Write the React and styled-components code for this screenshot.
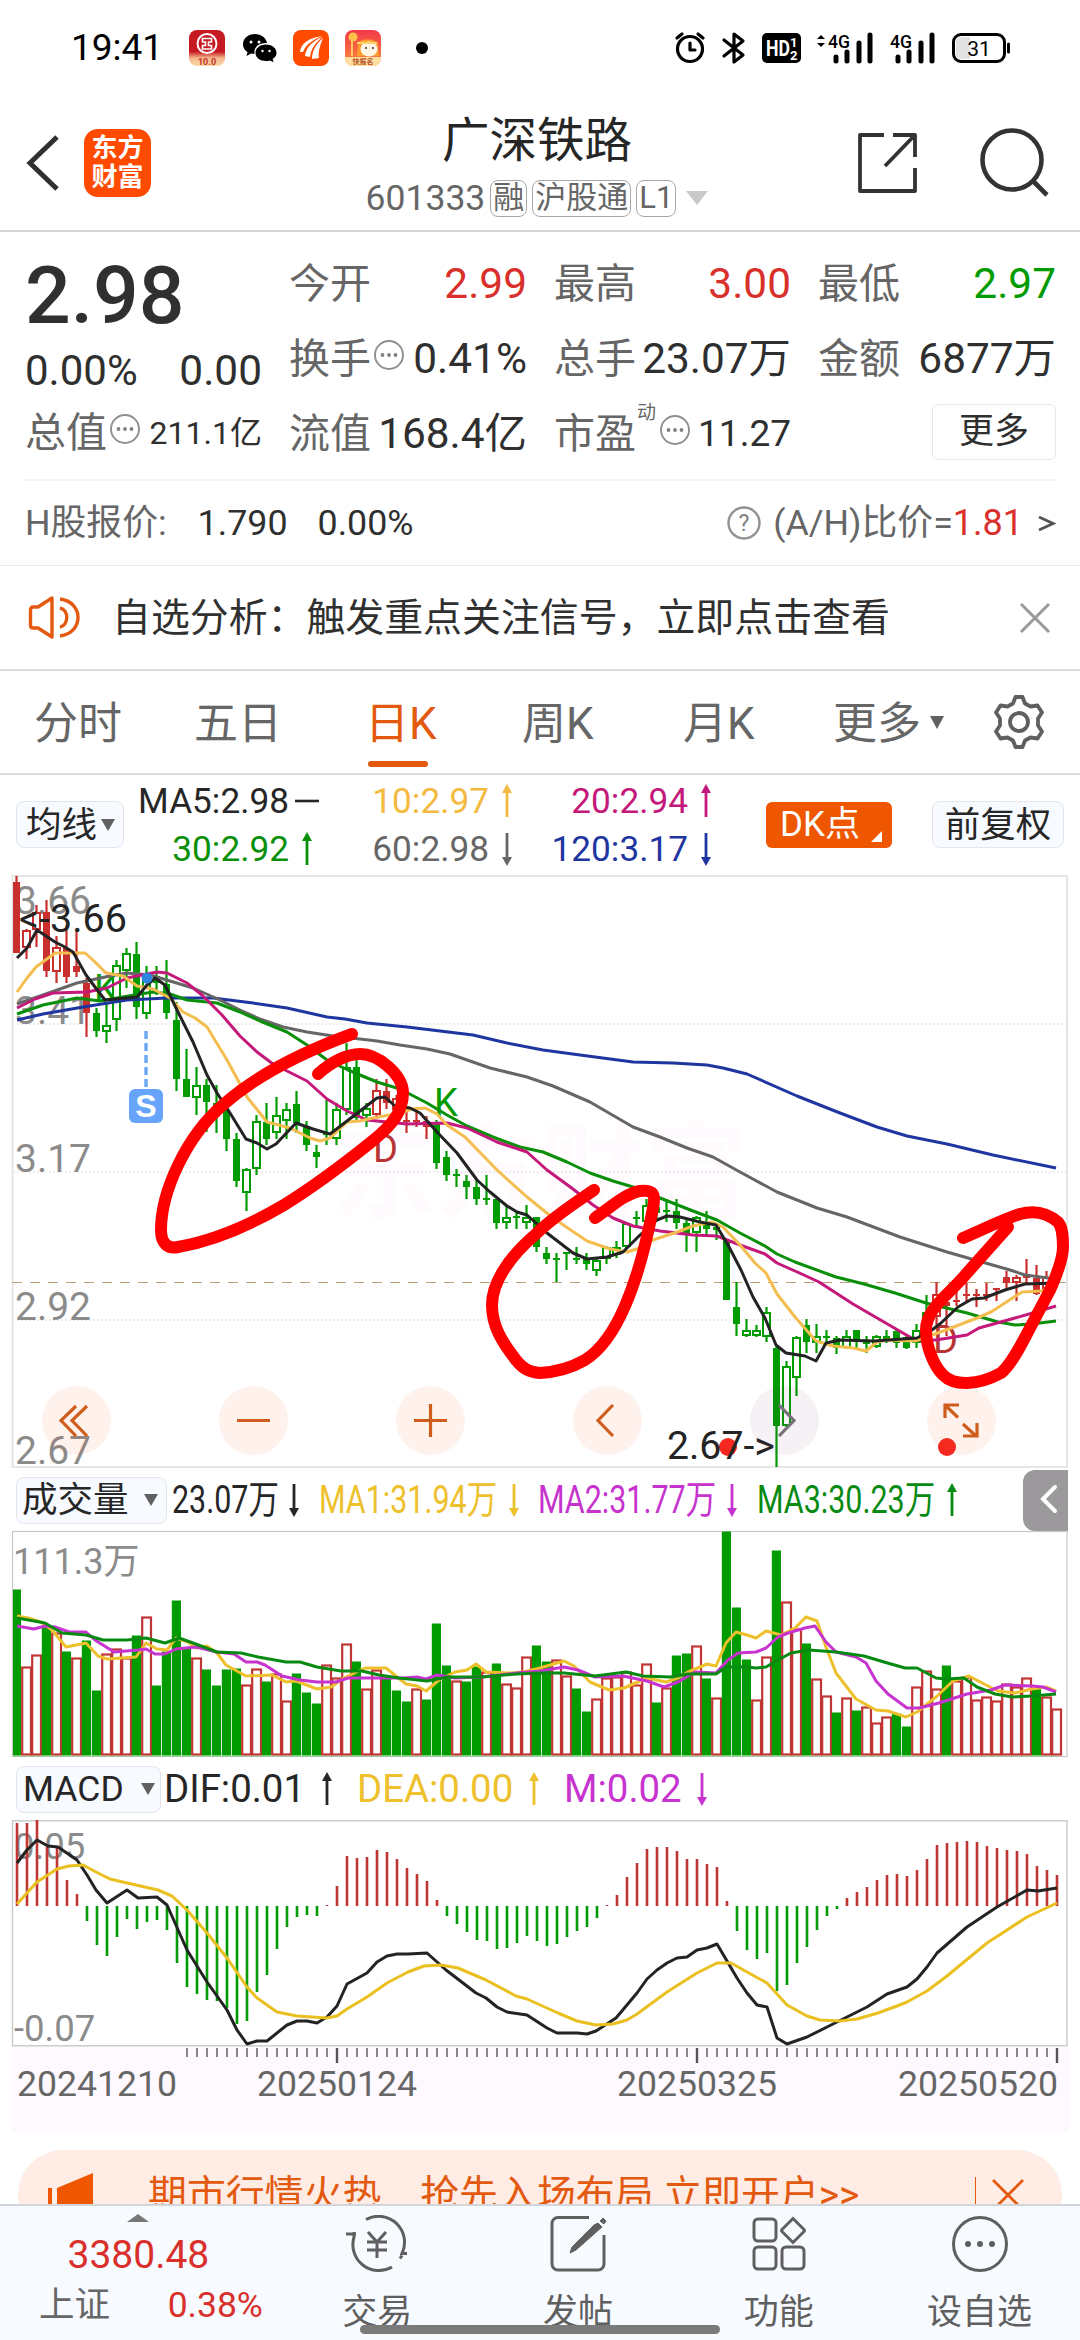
import styled, { createGlobalStyle } from "styled-components";

const GlobalStyle = createGlobalStyle`
  * {
    box-sizing: border-box;
  }

  body {
    margin: 0;
    background: #ffffff;
    font-family: Roboto, "Noto Sans CJK SC", sans-serif;
    color: #2f2f2f;
  }
`;

const RED = "#d9302c";
const UP = "#c03634";
const GREEN = "#009b00";
const ORANGE = "#e3590f";
const GRAY = "#666666";

const Container = styled.div`
  width: 1080px;
  height: 2340px;
  display: flex;
  flex-direction: column;
  overflow: hidden;
  white-space: nowrap;
`;

const Main = styled.main`
  height: 2204px;
  flex: none;
  overflow: hidden;
`;

const StatusBar = styled.div`
  height: 95px;
  padding: 0 68px 0 71px;
  display: flex;
  justify-content: space-between;
  align-items: center;
`;

const StatusGroup = styled.div`
  display: flex;
  align-items: center;
`;

const Clock = styled.span`
  font-size: 37px;
  line-height: 40px;
  width: 118px;
  color: #000000;
`;

const Header = styled.header`
  height: 137px;
  border-bottom: 2px solid #d6d6d8;
  display: grid;
  grid-template-columns: 1fr auto 1fr;
  padding: 0 31px 0 25px;
`;

const HeaderSide = styled.div`
  display: flex;
  align-items: center;
  height: 136px;
  justify-content: ${(props) => (props.$end ? "flex-end" : "flex-start")};
  gap: ${(props) => props.$gap}px;
`;

const Logo = styled.div`
  width: 67px;
  height: 68px;
  border-radius: 14px;
  background: #ff4a00;
  color: #ffffff;
  font-size: 26px;
  line-height: 29px;
  font-weight: 700;
  text-align: center;
  padding-top: 5px;
`;

const TitleBlock = styled.div`
  display: flex;
  flex-direction: column;
  align-items: center;
  padding-top: 17px;
`;

const Title = styled.h1`
  margin: 0;
  font-size: 47.5px;
  font-weight: 400;
  line-height: 58px;
  color: #262626;
`;

const CodeRow = styled.div`
  display: flex;
  align-items: center;
  margin-top: 9px;
  gap: 5px;
  font-size: 35.5px;
  line-height: 38px;
  color: ${GRAY};
`;

const Tag = styled.span`
  height: 37px;
  border: 1.5px solid #a8a8a8;
  border-radius: 8px;
  padding: 0 2px;
  font-size: 31px;
  line-height: 33px;
`;

const Caret = styled.span`
  width: 0;
  height: 0;
  border-left: ${(props) => props.$w / 2}px solid transparent;
  border-right: ${(props) => props.$w / 2}px solid transparent;
  border-top: ${(props) => props.$h}px solid ${(props) => props.$color || "#606060"};
  margin-left: ${(props) => props.$ml || 0}px;
`;

const Quote = styled.section`
  height: 249px;
  margin: 0 24px 0 25px;
  border-bottom: 2px solid #f4f4f4;
  display: flex;
  gap: 27px;
`;

const QuoteLeft = styled.div`
  width: 237px;
  padding-top: 20px;
`;

const Price = styled.div`
  font-size: 80.5px;
  font-weight: 500;
  line-height: 88px;
  color: #303030;
`;

const Metric = styled.div`
  display: flex;
  align-items: center;
  height: ${(props) => props.$h || 75}px;
  font-size: 42px;
  line-height: 50px;
`;

const Label = styled.span`
  font-size: 41px;
  color: ${GRAY};
`;

const Sup = styled.span`
  font-size: 19px;
  line-height: 20px;
  align-self: flex-start;
  margin: 7px 1px 0;
  color: ${GRAY};
`;

const Value = styled.span`
  margin-left: auto;
  font-size: ${(props) => props.$size || 42.4}px;
  color: ${(props) => props.$color || "#2f2f2f"};
`;

const QuoteGrid = styled.div`
  display: grid;
  grid-template-columns: 238px 237px 238px;
  grid-auto-rows: 75px;
  column-gap: 27px;
  padding-top: 14px;
`;

const MoreButton = styled.button`
  margin: 8px 0 0 auto;
  width: 124px;
  height: 56px;
  border: 1.5px solid #e8e6e8;
  border-radius: 6px;
  background: #ffffff;
  font: 35px/48px Roboto, "Noto Sans CJK SC", sans-serif;
  color: #2f2f2f;
  padding: 0;
`;

const HShare = styled.section`
  height: 85px;
  padding: 0 24px 0 25px;
  border-bottom: 1.5px solid #ebebeb;
  display: flex;
  align-items: center;
  font-size: 35.8px;
  line-height: 40px;
  color: ${GRAY};
`;

const Dark = styled.span`
  color: #2f2f2f;
  margin-left: ${(props) => props.$ml}px;
`;

const Ratio = styled.div`
  margin-left: auto;
  display: flex;
  align-items: center;
`;

const Notice = styled.section`
  height: 105px;
  border-bottom: 2px solid #dcdcdc;
  padding: 0 29px 0 28px;
  display: flex;
  align-items: center;
  font-size: 38.9px;
  line-height: 44px;
  color: #303030;
`;

const NoticeText = styled.span`
  margin-left: 30px;
  margin-right: auto;
`;

const Tabs = styled.nav`
  height: 104px;
  border-bottom: 2px solid #dcdcdc;
  padding: 0 28px 0 34px;
  display: flex;
  align-items: center;
  font-size: 44px;
  line-height: 50px;
  color: ${GRAY};

  svg {
    flex: none;
  }
`;

const Tab = styled.a`
  width: ${(props) => props.$w}px;
  height: 102px;
  padding-top: 28px;
  display: flex;
  flex-direction: column;
  color: ${(props) => (props.$active ? ORANGE : GRAY)};

  &::after {
    content: "";
    width: 60px;
    height: 6px;
    border-radius: 3px;
    margin: 12px 0 0 3px;
    background: ${(props) => (props.$active ? ORANGE : "transparent")};
  }
`;

const Legend = styled.section`
  height: 95px;
  display: flex;
  align-items: center;
  padding: 4px 16px 0;
`;

const Pill = styled.button`
  width: ${(props) => props.$w}px;
  height: 47px;
  flex: none;
  border: 1.5px solid #e4e4ee;
  border-radius: 8px;
  background: #f7faff;
  display: flex;
  align-items: center;
  justify-content: ${(props) => (props.$center ? "center" : "flex-start")};
  padding: 0 0 0 ${(props) => (props.$center ? 0 : props.$pad)}px;
  font: 35.5px/44px Roboto, "Noto Sans CJK SC", sans-serif;
  color: #262626;
`;

const AverageGrid = styled.div`
  display: grid;
  grid-template-columns: 195px 200px 199px;
  grid-auto-rows: 48px;
  width: 642px;
`;

const Average = styled.div`
  display: flex;
  align-items: center;
  justify-content: flex-end;
  gap: 6px;
  font-size: 35.2px;
  line-height: 40px;
  color: ${(props) => props.$color};
`;

const DKButton = styled.button`
  width: 126px;
  height: 46px;
  border: 0;
  border-radius: 6px;
  background: #ef5600;
  color: #ffffff;
  display: flex;
  align-items: center;
  padding: 0 0 0 14px;
  margin-right: 40px;
  font: 35px/44px Roboto, "Noto Sans CJK SC", sans-serif;
`;

const Corner = styled.span`
  align-self: flex-end;
  margin: 0 0 6px 11px;
  border-left: 11px solid transparent;
  border-bottom: 11px solid #ffffff;
`;

const ChartArea = styled.div`
  position: relative;
  height: ${(props) => props.$h}px;

  svg {
    display: block;
  }
`;

const Controls = styled.div`
  position: absolute;
  left: 42px;
  right: 84px;
  top: 516px;
  display: flex;
  justify-content: space-between;
`;

const RoundButton = styled.button`
  width: 69px;
  height: 69px;
  border: 0;
  border-radius: 50%;
  padding: 0;
  background: ${(props) => (props.$muted ? "rgba(110, 60, 120, 0.07)" : "rgba(255, 90, 20, 0.08)")};
`;

const IndicatorRow = styled.div`
  height: ${(props) => props.$h}px;
  padding-left: 16px;
  display: flex;
  align-items: center;
  font-size: 38.4px;
  line-height: 46px;
`;

const Stat = styled.span`
  width: ${(props) => props.$w}px;
  margin-left: ${(props) => props.$ml}px;
  margin-right: ${(props) => props.$mr || 12}px;
  color: ${(props) => props.$color};
`;

const Narrow = styled.span`
  display: inline-block;
  transform: scaleX(0.793);
  transform-origin: left center;
`;

const ArrowSlot = styled.span`
  width: 12px;
  height: 34px;
  color: ${(props) => props.$color};
`;

const Collapse = styled.button`
  width: 45px;
  height: 61px;
  border: 0;
  padding: 0 0 0 2px;
  margin-left: auto;
  margin-right: 12px;
  border-radius: 12px 0 0 12px;
  background: #9b999c;
`;

const Axis = styled.div`
  margin: 0 11px 0 12px;
  height: 85px;
  background: #fdf9fe;
`;

const Banner = styled.div`
  height: 90px;
  margin: 18px 18px 0;
  border-radius: 45px;
  background: #ffece4;
  color: ${ORANGE};
  display: flex;
  align-items: center;
  padding: 0 38px 0 30px;
  font-size: 38.9px;
  line-height: 44px;
`;

const BannerText = styled.span`
  margin-left: 54px;
  margin-right: auto;
  white-space: pre;
`;

const Divider = styled.span`
  width: 1.5px;
  height: 36px;
  background: ${ORANGE};
  margin-right: 16px;
`;

const BottomBar = styled.footer`
  height: 136px;
  flex: none;
  position: relative;
  border-top: 2px solid #d3d5dc;
  background: #f7faff;
  display: flex;
`;

const IndexCard = styled.div`
  width: 277px;
  padding-top: 8px;
  display: flex;
  flex-direction: column;
  align-items: center;
  color: ${RED};
`;

const IndexValue = styled.div`
  font-size: 39px;
  line-height: 44px;
  margin-top: 11px;
`;

const IndexRow = styled.div`
  width: 224px;
  display: flex;
  justify-content: space-between;
  margin-top: 8px;
  margin-left: 25px;
  font-size: 35.5px;
  line-height: 40px;
`;

const Name = styled.span`
  color: ${GRAY};
`;

const NavItem = styled.a`
  width: 201px;
  padding-top: 9px;
  display: flex;
  flex-direction: column;
  align-items: center;
  gap: 20px;
  font-size: 35px;
  line-height: 40px;
  color: #5f5f5f;
`;

const HomeIndicator = styled.div`
  position: absolute;
  left: 360px;
  bottom: 6px;
  width: 360px;
  height: 9px;
  border-radius: 5px;
  background: #7a7a7a;
`;

/* [high, body top, body bottom, low, kind]; upper case is a solid body */
const candles = [
  [6, 12, 83, 83, "R"], [59, 60, 78, 89, "r"], [35, 42, 60, 77, "r"], [30, 42, 101, 107, "R"], [66, 77, 102, 113, "r"],
  [55, 78, 107, 113, "R"], [60, 96, 102, 107, "R"], [108, 113, 143, 167, "R"], [138, 143, 161, 167, "G"], [132, 155, 162, 173, "g"],
  [90, 95, 150, 161, "g"], [78, 83, 101, 118, "g"], [72, 84, 137, 149, "G"], [96, 104, 144, 149, "g"], [96, 106, 113, 125, "G"],
  [90, 114, 143, 149, "G"], [132, 150, 209, 221, "G"], [179, 209, 227, 227, "G"], [197, 215, 228, 245, "g"], [209, 215, 232, 262, "G"],
  [215, 233, 245, 263, "G"], [235, 240, 269, 281, "G"], [263, 269, 311, 317, "G"], [298, 299, 323, 341, "g"], [245, 251, 299, 305, "g"],
  [233, 252, 269, 275, "G"], [227, 245, 263, 269, "g"], [233, 239, 251, 269, "g"], [221, 234, 253, 263, "G"], [251, 256, 275, 281, "G"],
  [275, 282, 287, 298, "G"], [230, 263, 265, 275, "G"], [233, 239, 269, 275, "g"], [173, 197, 240, 245, "g"], [183, 197, 248, 250, "G"],
  [233, 238, 246, 257, "g"], [209, 220, 245, 249, "r"], [209, 221, 233, 239, "R"], [225, 228, 240, 243, "r"], [240, 250, 252, 263, "R"],
  [240, 250, 252, 257, "R"], [246, 251, 257, 269, "R"], [250, 252, 293, 299, "G"], [281, 287, 305, 311, "G"], [299, 304, 306, 317, "G"],
  [305, 311, 317, 329, "G"], [310, 317, 329, 335, "G"], [305, 328, 330, 335, "G"], [329, 329, 353, 359, "G"], [335, 347, 353, 359, "g"],
  [341, 346, 348, 359, "G"], [335, 347, 353, 359, "g"], [347, 347, 377, 382, "G"], [377, 383, 389, 394, "G"], [383, 388, 390, 412, "G"],
  [382, 382, 384, 400, "G"], [377, 388, 390, 394, "G"], [383, 389, 394, 400, "G"], [389, 390, 401, 406, "g"], [376, 377, 389, 394, "g"],
  [371, 377, 385, 388, "g"], [352, 353, 377, 378, "g"], [341, 347, 349, 357, "G"], [329, 335, 352, 355, "g"], [330, 337, 343, 350, "G"],
  [329, 340, 342, 352, "G"], [329, 341, 353, 359, "G"], [350, 353, 364, 382, "G"], [346, 347, 363, 382, "g"], [341, 353, 359, 365, "G"],
  [353, 357, 360, 370, "G"], [370, 370, 430, 430, "G"], [412, 437, 454, 466, "G"], [449, 460, 466, 467, "g"], [455, 460, 466, 467, "g"],
  [437, 442, 467, 472, "g"], [475, 478, 556, 597, "G"], [491, 496, 556, 557, "g"], [466, 467, 508, 526, "g"], [449, 455, 472, 483, "G"],
  [454, 466, 473, 483, "g"], [460, 466, 468, 473, "G"], [466, 468, 478, 484, "G"], [460, 466, 478, 479, "g"], [460, 460, 472, 479, "G"],
  [466, 472, 474, 483, "G"], [465, 466, 477, 478, "g"], [460, 466, 469, 473, "G"], [460, 461, 473, 478, "G"], [466, 467, 478, 479, "G"],
  [454, 460, 473, 478, "g"], [425, 442, 460, 465, "g"], [412, 424, 447, 455, "r"], [430, 432, 436, 466, "R"], [419, 430, 432, 436, "R"],
  [413, 424, 426, 431, "R"], [419, 424, 426, 437, "R"], [413, 424, 426, 431, "R"], [418, 418, 420, 431, "R"], [401, 407, 413, 419, "R"],
  [405, 407, 413, 431, "r"], [389, 406, 408, 413, "R"], [395, 408, 424, 425, "R"], [401, 407, 419, 421, "r"], [405, 407, 413, 418, "R"],
];

const priceLines = [
  {
    color: "#1f35a0",
    points: "17,150 43,144 83,137 127,130 167,128 213,128 253,133 287,138 327,147 345,149 367,153 407,157 440,161 473,165 507,173 543,180 580,185 633,192 673,193 707,195 723,198 747,204 797,226 840,243 877,257 907,266 947,274 993,285 1056,298",
  },
  {
    color: "#666666",
    points: "17,134 43,125 77,113 110,106 127,103 150,105 170,111 193,118 220,130 240,140 260,149 283,157 307,162 333,166 360,169 377,171 400,175 427,179 450,184 490,198 527,207 553,216 590,232 633,257 660,267 687,278 713,287 740,302 777,322 817,338 847,347 900,367 947,382 1010,400 1025,405 1056,409",
  },
  {
    color: "#098f09",
    points: "17,144 43,135 77,128 100,131 117,128 140,124 153,122 170,124 187,130 217,133 240,142 260,151 287,162 307,175 327,190 348,200 360,205 377,212 400,219 427,233 447,245 467,256 493,267 520,277 543,282 567,292 590,303 613,311 633,317 660,328 693,341 717,350 740,363 765,376 777,384 795,392 836,407 864,414 895,423 926,433 967,443 998,452 1015,455 1032,454 1056,451",
  },
  {
    color: "#c4187a",
    points: "17,138 35,129 53,123 87,122 107,118 127,108 157,102 167,103 187,113 202,125 222,145 240,166 257,182 273,194 307,211 327,229 347,241 367,250 407,254 447,253 467,258 497,272 527,282 547,300 573,319 593,335 613,348 633,356 660,361 693,365 717,366 740,375 765,384 777,393 795,401 819,412 853,434 884,452 915,470 936,470 967,465 979,458 1008,450 1036,442 1056,436",
  },
  {
    color: "#f4bd4f",
    points: "17,122 27,108 36,97 55,83 85,83 95,92 106,103 123,106 137,116 153,119 170,128 183,142 195,148 207,157 227,190 247,227 267,252 290,258 310,268 320,271 330,268 347,252 360,251 373,248 400,243 412,239 425,238 437,244 447,255 465,267 497,300 527,327 553,348 587,371 610,379 627,382 640,378 653,370 677,362 693,356 712,352 723,357 740,375 755,393 766,403 777,424 795,447 816,471 833,476 853,478 866,481 877,472 888,470 915,471 946,460 977,448 991,442 1022,422 1041,421 1056,417",
  },
  {
    color: "#232323",
    points: "17,88 27,78 37,60 55,72 63,76 73,82 86,105 95,117 105,130 137,127 147,115 155,108 165,115 177,140 193,172 207,205 217,223 230,243 246,269 257,273 267,279 276,274 296,253 313,259 330,264 347,251 360,241 377,228 385,227 395,236 410,238 420,243 437,262 457,283 477,310 490,322 507,336 517,342 527,345 547,363 573,383 587,389 607,387 623,382 640,365 657,350 667,346 680,347 700,352 716,355 728,375 741,400 753,427 765,448 776,475 786,483 805,486 816,491 826,473 840,470 874,471 917,468 932,460 941,453 958,437 972,429 984,428 1005,420 1025,414 1056,413",
  },
];

const volumes = [
  166, 89, 101, 128, 123, 104, 98, 115, 65, 102, 107, 98, 120, 139, 70, 104, 155, 108, 98, 86, 70, 86, 87, 71, 87,
  74, 82, 55, 82, 63, 52, 91, 78, 112, 94, 67, 86, 79, 65, 54, 67, 56, 132, 90, 75, 74, 89, 84, 92, 72,
  68, 99, 110, 94, 96, 80, 67, 44, 57, 78, 79, 84, 71, 92, 53, 68, 100, 102, 110, 77, 58, 224, 148, 96, 56,
  99, 205, 154, 127, 112, 77, 60, 43, 58, 45, 49, 33, 39, 42, 29, 69, 85, 67, 90, 75, 79, 56, 59, 55, 72,
  69, 78, 67, 59, 47,
];

const risingVolumes = [
  1, 2, 4, 6, 9, 10, 11, 13, 18, 23, 24, 26, 27, 31, 32, 33, 35, 36, 40, 44, 47, 49, 50, 51, 54, 55, 58, 59, 60, 61, 62,
  63, 65, 68, 70, 74, 75, 77, 78, 80, 81, 83, 85, 86, 87, 90, 91, 92, 94, 95, 96, 97, 98, 99, 100, 101, 103, 104,
];

const volumeLines = [
  {
    color: "#edc02c",
    points: "17,86 28,88 41,92 52,100 66,117 86,113 98,126 107,129 136,127 146,113 157,119 167,120 176,108 188,112 196,118 207,116 217,123 226,135 246,146 272,145 286,152 296,151 317,159 331,157 344,148 365,138 386,138 406,154 417,156 426,161 439,150 455,142 467,140 476,134 486,142 510,143 523,142 540,138 564,131 574,136 590,152 609,160 624,158 647,148 666,152 678,148 688,142 707,134 716,136 726,113 736,102 747,105 756,108 766,101 781,105 795,98 806,87 817,91 826,117 836,143 856,169 876,180 888,181 906,187 917,182 936,167 953,151 969,146 986,155 998,161 1015,163 1032,159 1046,157 1056,161",
  },
  {
    color: "#c733cf",
    points: "17,96 34,99 45,96 55,97 69,102 86,102 95,110 114,122 138,120 146,119 155,124 165,124 176,119 196,117 217,122 234,124 246,132 257,132 265,135 282,146 300,150 317,152 336,152 348,148 372,148 403,148 417,147 426,149 437,145 455,148 482,147 517,143 540,141 564,137 578,140 595,147 623,146 647,151 664,157 678,152 695,142 716,143 728,130 738,123 756,122 766,118 778,107 788,103 805,98 815,96 826,112 836,122 856,127 866,133 876,151 888,164 907,178 919,178 939,173 967,164 991,160 1005,155 1032,156 1043,157 1056,162",
  },
  {
    color: "#078a12",
    points: "17,88 34,91 45,93 62,103 86,105 103,110 127,110 146,108 165,113 179,108 193,113 217,122 241,123 258,127 286,132 300,132 317,137 341,141 362,141 379,145 399,148 427,151 448,147 482,147 517,144 540,143 564,143 595,146 626,142 643,146 671,147 688,144 716,144 726,137 747,137 756,138 766,137 778,130 791,123 809,120 836,122 864,126 884,132 905,138 917,138 936,148 946,149 964,148 977,157 995,164 1012,167 1032,166 1056,164",
  },
];

const histogram = [
  83, 83, 86, 59, 60, 26, 12, -15, -39, -50, -31, -13, -23, -16, -14, -24, -57, -81, -88, -94, -95, -102, -118, -115, -86,
  -69, -43, -21, -11, -9, -10, 1, 20, 50, 48, 49, 56, 54, 47, 38, 32, 25, 6, -10, -18, -26, -34, -35, -43, -42,
  -37, -30, -35, -40, -38, -31, -25, -21, -12, 1, 11, 29, 43, 57, 59, 59, 55, 47, 47, 42, 39, 5, -25, -44, -53,
  -47, -85, -79, -57, -41, -24, -10, -3, 8, 14, 19, 26, 31, 32, 30, 36, 47, 61, 63, 64, 65, 64, 60, 58, 56,
  55, 52, 40, 36, 31,
];

const macdLines = [
  {
    color: "#232323",
    points: "17,43 27,30 37,20 48,26 58,27 77,40 87,55 96,70 107,83 127,70 138,78 157,77 167,85 187,130 207,162 227,190 237,210 247,224 257,221 267,221 277,213 287,205 297,201 307,201 317,203 327,197 337,186 347,164 367,153 377,142 387,136 397,134 408,134 427,133 446,150 476,173 486,178 497,187 507,192 527,195 547,208 557,213 577,213 587,214 596,211 616,198 637,173 647,159 657,150 667,143 677,138 687,137 697,130 707,128 717,124 737,158 747,173 757,185 767,187 777,218 787,224 807,217 827,207 847,197 867,187 887,174 907,167 917,159 927,147 937,133 967,107 997,87 1027,70 1038,71 1057,68",
  },
  {
    color: "#eabf20",
    points: "17,84 37,62 57,49 69,46 83,45 96,52 110,59 127,63 158,70 172,76 187,90 207,113 227,138 247,167 257,178 277,192 297,196 327,198 337,196 347,189 367,177 387,163 408,152 424,146 441,145 458,148 486,160 516,176 527,179 558,193 577,201 596,205 613,204 627,200 637,194 667,172 697,153 717,143 731,143 747,152 767,163 787,185 807,196 820,200 840,201 857,199 878,193 897,186 907,182 927,171 947,156 987,123 1027,97 1057,83",
  },
];

const barX = (i) => 17 + i * 10;

const Lines = ({ lines }) => (
  <g fill="none" strokeWidth="3" strokeLinejoin="round">
    {lines.map((l) => (
      <polyline key={l.color} points={l.points} stroke={l.color} />
    ))}
  </g>
);

const Candle = ({ i, data }) => {
  const [high, top, bottom, low, kind] = data;
  const color = kind.toLowerCase() === "r" ? "#c92f2d" : GREEN;
  const solid = kind === "R" || kind === "G";
  const x = barX(i) - 0.5;
  return (
    <g>
      <path d={`M${x} ${high}V${top}M${x} ${bottom}V${low}`} stroke={color} strokeWidth="2.2" />
      {solid ? (
        <rect x={x - 3.5} y={top} width="7" height={Math.max(bottom - top, 2)} fill={color} />
      ) : (
        <rect x={x - 3.5} y={top + 1} width="7" height={Math.max(bottom - top - 2, 2)} fill="#ffffff" stroke={color} strokeWidth="2" />
      )}
    </g>
  );
};

const PriceChart = () => (
  <svg width="1080" height="600" viewBox="0 0 1080 600">
    <text x="332" y="340" fontSize="104" fontWeight="700" fill="#fffafe">东方财富</text>
    <rect x="12.5" y="6" width="1054.5" height="591" fill="none" stroke="#e4e4e4" strokeWidth="1.8" />
    {[154, 302, 450].map((y) => (
      <path key={y} d={`M13 ${y}H1067`} stroke="#dcdcdc" strokeWidth="1.2" strokeDasharray="2 2" />
    ))}
    <path d="M12 412.5H1067" stroke="#c2a077" strokeWidth="1.2" strokeDasharray="10 8" />
    <g fontSize="39" fill="#8b8b8b">
      <text x="15" y="44">3.66</text>
      <text x="15" y="154">3.41</text>
      <text x="15" y="302">3.17</text>
      <text x="15" y="450">2.92</text>
      <text x="15" y="594">2.67</text>
    </g>
    {candles.map((c, i) => (
      <Candle key={i} i={i} data={c} />
    ))}
    <g fontSize="38">
      <text x="94" y="132" fill={GREEN}>K</text>
      <text x="434" y="246" fill={GREEN}>K</text>
      <text x="373" y="292" fill="#b83432">D</text>
      <text x="933" y="483" fill="#b83432">D</text>
    </g>
    <Lines lines={priceLines} />
    <text x="19" y="62" fontSize="39.5" fill="#232323">&lt;-3.66</text>
    <circle cx="147" cy="108" r="5.5" fill="#2f86e0" />
    <path d="M146 161V218" stroke="#69a6f5" strokeWidth="3.4" strokeDasharray="8 4" />
    <rect x="129" y="219" width="34" height="34" rx="6" fill="#66a5fb" />
    <text x="146" y="247" fontSize="32" fontWeight="700" fill="#ffffff" textAnchor="middle" fontFamily="Liberation Sans">S</text>
    <circle cx="728" cy="577" r="9" fill="#f5271f" />
    <circle cx="947" cy="577" r="9" fill="#f5271f" />
    <text x="667" y="589" fontSize="39.2" fill="#232323">2.67-&gt;</text>
  </svg>
);

const Marks = styled.svg`
  position: absolute;
  left: 0;
  top: 0;
  pointer-events: none;
`;

const HandMarks = () => (
  <Marks width="1080" height="600" viewBox="0 0 1080 600" fill="none" stroke="#ff0000" strokeWidth="12" strokeLinecap="round" strokeLinejoin="round">
    <path d="M352 164C300 183 256 206 224 234C186 266 161 322 161 360C161 374 168 379 178 377C212 371 245 358 284 335C318 314 345 293 370 273C394 254 403 241 403 222C402 204 378 184 360 184C346 184 330 193 318 204" />
    <path d="M594 320C575 333 553 347 536 364C510 386 492 412 492 435C492 456 502 472 516 490C524 500 530 502 540 503C556 502 571 498 585 490C604 478 616 457 625 436C638 406 646 375 653 338C656 323 653 320 640 321C624 324 610 338 595 348" />
    <path d="M1008 357L967 403C950 424 926 438 926 460C926 477 934 496 943 505C954 516 977 516 1001 503C1012 494 1022 473 1030 458L1050 420C1058 402 1063 385 1063 377C1063 364 1062 357 1058 352C1046 342 1034 340 1020 344C1002 350 984 359 963 368" />
  </Marks>
);

const VolumeChart = () => (
  <svg width="1080" height="228" viewBox="0 0 1080 228">
    <rect x="12.5" y="1.5" width="1054.5" height="225" fill="none" stroke="#c8c8c8" strokeWidth="1.2" />
    <path d="M13 226.5H1058" stroke="#9cce9c" strokeWidth="1.2" />
    <text x="13" y="44" fontSize="36" fill="#8b8b8b">111.3万</text>
    {volumes.map((v, i) => {
      const x = barX(i) - 0.5;
      if (!risingVolumes.includes(i)) {
        return <rect key={i} x={i === 0 ? 13 : x - 4.7} y={225.5 - v} width={i === 0 ? 8 : 9.2} height={v} fill={GREEN} />;
      }
      return <rect key={i} x={x - 4.3} y={226.5 - v} width="8.8" height={v - 2} fill="#ffffff" stroke={UP} strokeWidth="2.2" />;
    })}
    <Lines lines={volumeLines} />
  </svg>
);

const MacdChart = () => (
  <svg width="1080" height="227" viewBox="0 0 1080 227">
    <rect x="12.5" y="0.8" width="1054.5" height="225" fill="none" stroke="#c8c8c8" strokeWidth="1.4" />
    <g fontSize="36.5" fill="#8b8b8b">
      <text x="14" y="39">0.05</text>
      <text x="14" y="221">-0.07</text>
    </g>
    {histogram.map((v, i) => (
      <path key={i} d={`M${barX(i)} 86V${86 - v}`} stroke={v > 0 ? UP : GREEN} strokeWidth="2.6" />
    ))}
    <Lines lines={macdLines} />
  </svg>
);

const DateAxis = () => {
  const ticks = [];
  for (let i = 17; i < 105; i++) ticks.push(i);
  return (
    <Axis>
      <svg width="1057" height="85" viewBox="12 0 1057 85">
        {ticks.map((i) => {
          const major = i === 32 || i === 68 || i === 104;
          return <path key={i} d={`M${barX(i)} 1V${major ? 16 : 10}`} stroke="#555555" strokeWidth={major ? 2.4 : 1.4} />;
        })}
        <g fontSize="35.6" fill={GRAY}>
          <text x="17" y="49">20241210</text>
          <text x="337" y="49" textAnchor="middle">20250124</text>
          <text x="697" y="49" textAnchor="middle">20250325</text>
          <text x="1058" y="49" textAnchor="end">20250520</text>
        </g>
      </svg>
    </Axis>
  );
};

const Arrow = ({ dir, color }) => (
  <ArrowSlot $color={color}>
    <svg width="12" height="34" viewBox="0 0 12 34" display="block">
      <path d={dir === "up" ? "M6 33V6" : "M6 1V28"} stroke="currentColor" strokeWidth="2.8" />
      <path d={dir === "up" ? "M6 0L11 9H1Z" : "M6 34L11 25H1Z"} fill="currentColor" />
    </svg>
  </ArrowSlot>
);

const Trend = styled.span`
  width: 24px;
  display: flex;
  justify-content: center;
`;

const Dots = styled.svg`
  margin: -8px 0 0 2px;
  flex: none;
`;

const DotsIcon = () => (
  <Dots width="32" height="32" viewBox="0 0 32 32">
    <circle cx="16" cy="16" r="14" fill="none" stroke="#8f8f8f" strokeWidth="1.9" />
    <g fill="#808080">
      <circle cx="9.5" cy="16" r="1.9" />
      <circle cx="16" cy="16" r="1.9" />
      <circle cx="22.5" cy="16" r="1.9" />
    </g>
  </Dots>
);

const HelpIcon = styled.svg`
  margin-right: 11px;
`;

const Chevron = styled.svg`
  margin-left: 13px;
`;

const StatusLeft = () => (
  <svg width="242" height="40" viewBox="189 28 242 40">
    <defs>
      <linearGradient id="bank" x1="0" y1="0" x2="0" y2="1">
        <stop offset="0.6" stopColor="#c51a22" />
        <stop offset="0.78" stopColor="#f4b58c" />
        <stop offset="1" stopColor="#fbd9a8" />
      </linearGradient>
      <linearGradient id="gold" x1="0" y1="0" x2="0" y2="1">
        <stop offset="0" stopColor="#f2384a" />
        <stop offset="1" stopColor="#ff8d3a" />
      </linearGradient>
    </defs>
    <rect x="189" y="30" width="36" height="36" rx="8" fill="url(#bank)" />
    <circle cx="207" cy="43.5" r="9.5" fill="none" stroke="#ffffff" strokeWidth="2" />
    <path d="M202.5 38.500H211.500V42H208.500V45.500H211.500V49H202.500V45.500H205.500V42H202.500Z" stroke="#ffffff" strokeWidth="1.6" fill="none" />
    <text x="207" y="65" fontSize="9" fontWeight="700" fill="#c8332a" textAnchor="middle">10.0</text>
    <path d="M255 34C248 34 243 38.5 243 44.5C243 48 245 50.5 247.5 52L246.5 56L251 53.5C252 53.8 253 54 254.5 54C253.5 47 259 42.5 267 43C266 37.5 261 34 255 34Z" fill="#000000" />
    <path d="M266 44.5C260 44.5 255.5 48 255.5 53C255.5 57.5 260 61 266 61C267.5 61 269 60.7 270 60.4L273.5 62.3L272.7 59C275 57.5 276.5 55.5 276.5 53C276.5 48 272 44.5 266 44.5Z" fill="#000000" />
    <g fill="#ffffff">
      <circle cx="251" cy="42" r="1.5" />
      <circle cx="259" cy="42" r="1.5" />
      <circle cx="262.5" cy="51" r="1.2" />
      <circle cx="269.5" cy="51" r="1.2" />
    </g>
    <rect x="293" y="30" width="36" height="36" rx="8" fill="#ff4a00" />
    <g fill="#ffffff">
      <path d="M300 52C301 43 309 38 322 36C313 40 306 44 303 52Z" />
      <path d="M305 56C306 47 313 41 322 37C316 43 311 48 310 57Z" />
      <path d="M312 59C312 50 317 43 323 38C320 46 318 51 319 58Z" />
    </g>
    <rect x="345" y="30" width="36" height="36" rx="8" fill="url(#gold)" />
    <path d="M358 44C358 38 378 38 378 45L379 56H357Z" fill="#ff9c2e" />
    <ellipse cx="369" cy="49" rx="8.5" ry="7.5" fill="#fff6e8" />
    <circle cx="353" cy="37" r="4.5" fill="#ffc04a" />
    <path d="M352 41V56M357 43H377" stroke="#ffd36b" strokeWidth="1.8" />
    <path d="M345 57H381V58A8 8 0 0 1 373 66H353A8 8 0 0 1 345 58Z" fill="#ffe0a0" />
    <text x="363" y="64" fontSize="7" fontWeight="700" fill="#b5552a" textAnchor="middle">快报名</text>
    <circle cx="366" cy="48" r="1" fill="#333333" />
    <circle cx="373" cy="48" r="1" fill="#333333" />
    <circle cx="422" cy="48" r="6" fill="#000000" />
  </svg>
);

const Signal = ({ x }) => (
  <path d={`M${x} 57V61M${x + 11} 52V61M${x + 23} 43V61M${x + 34} 35V61`} stroke="#000000" strokeWidth="5" strokeLinecap="round" />
);

const StatusRight = () => (
  <svg width="338" height="40" viewBox="675 28 338 40" fill="none">
    <g stroke="#000000" strokeWidth="3.2" strokeLinecap="round" strokeLinejoin="round">
      <circle cx="691" cy="49" r="12.5" />
      <path d="M691 43V50H696M678 38L683 34M704 38L699 34" />
      <path d="M725 40L744 55L735 62V34L744 41L725 56" />
    </g>
    <rect x="763" y="33" width="39" height="30" rx="5" fill="#000000" />
    <g fill="#ffffff" fontWeight="700">
      <text x="767" y="56" fontSize="22" textLength="24" lengthAdjust="spacingAndGlyphs">HD</text>
      <text x="791" y="47" fontSize="13">1</text>
      <text x="791" y="60" fontSize="13">2</text>
    </g>
    <path d="M818 39L822 35L826 39ZM818 43L822 47L826 43Z" fill="#000000" />
    <g fill="#000000" fontSize="19" fontWeight="500">
      <text x="829" y="48" textLength="22" lengthAdjust="spacingAndGlyphs">4G</text>
      <text x="891" y="48" textLength="22" lengthAdjust="spacingAndGlyphs">4G</text>
    </g>
    <Signal x={837} />
    <Signal x={899} />
    <rect x="954.5" y="34.5" width="51" height="27" rx="7.5" fill="#ffffff" stroke="#000000" strokeWidth="3" />
    <path d="M962 37H971V59H962A5 5 0 0 1 957 54V42A5 5 0 0 1 962 37Z" fill="#e2e2e2" />
    <path d="M1009.5 44V52" stroke="#000000" strokeWidth="3" strokeLinecap="round" />
    <text x="980" y="55.500" fontSize="21" fill="#000000" textAnchor="middle">31</text>
  </svg>
);

const controlIcons = [
  { d: "M34 20L19 34.5L34 50M45 20L30 34.5L45 50" },
  { d: "M18 34.5H51" },
  { d: "M18 34.5H51M34.5 18V51" },
  { d: "M40 19L25 34.5L40 50" },
  { d: "M29 19L44 34.5L29 50", muted: true },
  { d: "M18 32V19H32M19 20L31 31.5M36 38L49 50M50 37V50H36" },
];

const navItems = [
  {
    label: "交易",
    icon: (
      <>
        <path d="M21 4.5A26 26 0 0 1 57 38.5L62 38.5M57 40.5L55 43.5M11 19L1 19M9 17V22A26 26 0 0 0 47 52" />
        <path d="M23 17L32 27L41 17M32 27V43M22 27H42M22 35H42" />
      </>
    ),
  },
  {
    label: "发帖",
    icon: (
      <>
        <path d="M43 2.5H12A6 6 0 0 0 6 8.5V49A6 6 0 0 0 12 55H52A6 6 0 0 0 58 49V20" />
        <path d="M52 8L56 12L30 35L24 38L26 32L48 10Z" fill="#5f5f5f" strokeWidth="1" />
        <path d="M54 6L57 3L60 6L58 9Z" fill="#5f5f5f" strokeWidth="1" />
      </>
    ),
  },
  {
    label: "功能",
    icon: (
      <>
        <rect x="7" y="4" width="22" height="22" rx="4" />
        <rect x="7" y="32" width="22" height="22" rx="4" />
        <rect x="35" y="32" width="22" height="22" rx="4" />
        <path d="M46 3.5L57 14.5Q58 15.5 57 16.5L46 27.5L35 16.5Q34 15.5 35 14.5Z" />
      </>
    ),
  },
  {
    label: "设自选",
    icon: (
      <>
        <circle cx="32" cy="29" r="26.5" />
        <g fill="#5f5f5f" stroke="none">
          <circle cx="20" cy="29" r="3" />
          <circle cx="32" cy="29" r="3" />
          <circle cx="44" cy="29" r="3" />
        </g>
      </>
    ),
  },
];

const Gear = styled.svg`
  margin-left: auto;
`;

const GEAR = "M22.500 3H29.500L32 9.500L37.500 12.500L44.500 11.500L49 18.500L45 24.500V31.500L49 37.500L44.500 44.500L37.500 43.500L32 46.500L29.500 53H22.500L20 46.500L14.500 43.500L7.500 44.500L3 37.500L7 31.500V24.500L3 18.500L7.500 11.500L14.500 12.500L20 9.500Z";

export default function App() {
  return (
    <Container>
      <GlobalStyle />
      <Main>
        <StatusBar>
          <StatusGroup>
            <Clock>19:41</Clock>
            <StatusLeft />
          </StatusGroup>
          <StatusRight />
        </StatusBar>

        <Header>
          <HeaderSide $gap={23}>
            <svg width="36" height="60" viewBox="0 0 36 60">
              <path d="M32 4L5 30L32 56" fill="none" stroke="#303030" strokeWidth="5" />
            </svg>
            <Logo>东方<br />财富</Logo>
          </HeaderSide>
          <TitleBlock>
            <Title>广深铁路</Title>
            <CodeRow>
              <span>601333</span>
              <Tag>融</Tag>
              <Tag>沪股通</Tag>
              <Tag>L1</Tag>
              <Caret $w={22} $h={14} $ml={5} $color="#c9c9c9" />
            </CodeRow>
          </TitleBlock>
          <HeaderSide $gap={60} $end>
            <svg width="62" height="62" viewBox="0 0 62 62" fill="none" stroke="#333333" strokeWidth="3.8" strokeLinejoin="round">
              <path d="M27 3H3V59H58V36M36 3H58V25M58 3L28 34" />
            </svg>
            <svg width="70" height="70" viewBox="0 0 70 70" fill="none" stroke="#333333" strokeWidth="4.6">
              <circle cx="33" cy="32" r="29.5" />
              <path d="M54 53L68 67" />
            </svg>
          </HeaderSide>
        </Header>

        <Quote>
          <QuoteLeft>
            <Price>2.98</Price>
            <Metric $h={61}>0.00%<Value>0.00</Value></Metric>
            <Metric $h={64}>
              <Label>总值</Label><DotsIcon /><Value $size={32}>211.1亿</Value>
            </Metric>
          </QuoteLeft>
          <QuoteGrid>
            <Metric><Label>今开</Label><Value $color={RED}>2.99</Value></Metric>
            <Metric><Label>最高</Label><Value $color={RED}>3.00</Value></Metric>
            <Metric><Label>最低</Label><Value $color={GREEN}>2.97</Value></Metric>
            <Metric><Label>换手</Label><DotsIcon /><Value>0.41%</Value></Metric>
            <Metric><Label>总手</Label><Value>23.07万</Value></Metric>
            <Metric><Label>金额</Label><Value>6877万</Value></Metric>
            <Metric><Label>流值</Label><Value>168.4亿</Value></Metric>
            <Metric><Label>市盈</Label><Sup>动</Sup><DotsIcon /><Value $size={37}>11.27</Value></Metric>
            <MoreButton>更多</MoreButton>
          </QuoteGrid>
        </Quote>

        <HShare>
          <span>H股报价:</span>
          <Dark $ml={31}>1.790</Dark>
          <Dark $ml={30}>0.00%</Dark>
          <Ratio>
            <HelpIcon width="36" height="36" viewBox="0 0 36 36">
              <circle cx="18" cy="18" r="15.5" fill="none" stroke="#929292" strokeWidth="2.4" />
              <text x="18" y="26" fontSize="23" fill="#808080" textAnchor="middle">?</text>
            </HelpIcon>
            <span>(A/H)比价=</span>
            <Value $size={36} $color={RED}>1.81</Value>
            <Chevron width="20" height="24" viewBox="0 0 20 24">
              <path d="M3 6L17 12.5L3 19" fill="none" stroke="#555555" strokeWidth="2.8" />
            </Chevron>
          </Ratio>
        </HShare>

        <Notice>
          <svg width="54" height="48" viewBox="0 0 54 48" fill="none" stroke={ORANGE} strokeWidth="3.4" strokeLinejoin="round">
            <path d="M24 4L10 13H5Q2.500 13 2.500 16V31Q2.500 34 5 34H10L24 43Z" />
            <path d="M32 14C41 16 41 31 32 33M32 5C56 8 56 39 32 42" />
          </svg>
          <NoticeText>自选分析：触发重点关注信号，立即点击查看</NoticeText>
          <svg width="32" height="32" viewBox="0 0 32 32">
            <path d="M2 2L30 30M30 2L2 30" stroke="#999999" strokeWidth="3" />
          </svg>
        </Notice>

        <Tabs>
          <Tab $w={160}>分时</Tab>
          <Tab $w={171}>五日</Tab>
          <Tab $w={157} $active>日K</Tab>
          <Tab $w={161}>周K</Tab>
          <Tab $w={150}>月K</Tab>
          <Tab $w={86}>更多</Tab>
          <Caret $w={15} $h={13} $ml={11} />
          <Gear width="66" height="56" viewBox="-7 0 66 56" fill="none" stroke="#5f5f5f" strokeWidth="3.8" strokeLinejoin="round">
            <path d={GEAR} />
            <circle cx="26" cy="28" r="9" />
          </Gear>
        </Tabs>

        <Legend>
          <Pill $w={108} $pad={9}>均线<Caret $w={14} $h={12} $ml={4} /></Pill>
          <AverageGrid>
            <Average $color="#262626">MA5:2.98<Trend><svg width="24" height="4"><path d="M0 2H24" stroke="#262626" strokeWidth="2.6" /></svg></Trend></Average>
            <Average $color="#f3b940">10:2.97<Trend><Arrow dir="up" /></Trend></Average>
            <Average $color="#c4187a">20:2.94<Trend><Arrow dir="up" /></Trend></Average>
            <Average $color="#098f09">30:2.92<Trend><Arrow dir="up" /></Trend></Average>
            <Average $color="#666666">60:2.98<Trend><Arrow dir="down" /></Trend></Average>
            <Average $color="#1f35a0">120:3.17<Trend><Arrow dir="down" /></Trend></Average>
          </AverageGrid>
          <DKButton>DK点<Corner /></DKButton>
          <Pill $w={132} $center>前复权</Pill>
        </Legend>

        <ChartArea $h={600}>
          <PriceChart />
          <Controls>
            {controlIcons.map((icon) => (
              <RoundButton key={icon.d} $muted={icon.muted}>
                <svg width="69" height="69" viewBox="0 0 69 69" fill="none" stroke={icon.muted ? "#77717a" : "#cf5d1c"} strokeWidth="3.2">
                  <path d={icon.d} />
                </svg>
              </RoundButton>
            ))}
          </Controls>
          <HandMarks />
        </ChartArea>

        <IndicatorRow $h={60}>
          <Pill $w={151} $pad={5}>成交量<Caret $w={15} $h={12} $ml={15} /></Pill>
          <Stat $w={107} $ml={5} $mr={9} $color="#262626"><Narrow>23.07万</Narrow></Stat>
          <Arrow dir="down" color="#262626" />
          <Stat $w={178} $ml={19} $mr={11} $color="#edc02c"><Narrow>MA1:31.94万</Narrow></Stat>
          <Arrow dir="down" color="#edc02c" />
          <Stat $w={178} $ml={18} $mr={10} $color="#c733cf"><Narrow>MA2:31.77万</Narrow></Stat>
          <Arrow dir="down" color="#c733cf" />
          <Stat $w={178} $ml={19} $mr={11} $color="#078a12"><Narrow>MA3:30.23万</Narrow></Stat>
          <Arrow dir="up" color="#078a12" />
          <Collapse>
            <svg width="36" height="40" viewBox="0 0 36 40" fill="none" stroke="#ffffff" strokeWidth="4" strokeLinecap="round">
              <path d="M26 8L14 20L26 32" />
            </svg>
          </Collapse>
        </IndicatorRow>

        <ChartArea $h={228}>
          <VolumeChart />
        </ChartArea>

        <IndicatorRow $h={62}>
          <Pill $w={145} $pad={6}>MACD<Caret $w={14} $h={12} $ml={17} /></Pill>
          <Stat $w={142} $ml={3} $mr={15} $color="#262626">DIF:0.01</Stat>
          <Arrow dir="up" color="#262626" />
          <Stat $w={158} $ml={24} $mr={13} $color="#edc02c">DEA:0.00</Stat>
          <Arrow dir="up" color="#edc02c" />
          <Stat $w={118} $ml={24} $mr={14} $color="#c733cf">M:0.02</Stat>
          <Arrow dir="down" color="#c733cf" />
        </IndicatorRow>

        <ChartArea $h={227}>
          <MacdChart />
        </ChartArea>
        <DateAxis />

        <Banner>
          <svg width="46" height="44" viewBox="0 0 46 44">
            <path d="M0 15H4V44H0ZM9 15L45 0V44H9Z" fill="#ef5600" />
          </svg>
          <BannerText>期市行情火热　抢先入场布局 立即开户&gt;&gt;</BannerText>
          <Divider />
          <svg width="32" height="32" viewBox="0 0 32 32">
            <path d="M1 1L31 31M31 1L1 31" stroke={ORANGE} strokeWidth="2.8" />
          </svg>
        </Banner>
      </Main>

      <BottomBar>
        <IndexCard>
          <svg width="22" height="8" viewBox="0 0 22 8">
            <path d="M11 0L22 8H0Z" fill="#777777" />
          </svg>
          <IndexValue>3380.48</IndexValue>
          <IndexRow><Name>上证</Name><span>0.38%</span></IndexRow>
        </IndexCard>
        {navItems.map((item) => (
          <NavItem key={item.label}>
            <svg width="64" height="58" viewBox="0 0 64 58" fill="none" stroke="#5f5f5f" strokeWidth="3">
              {item.icon}
            </svg>
            {item.label}
          </NavItem>
        ))}
        <HomeIndicator />
      </BottomBar>
    </Container>
  );
}
